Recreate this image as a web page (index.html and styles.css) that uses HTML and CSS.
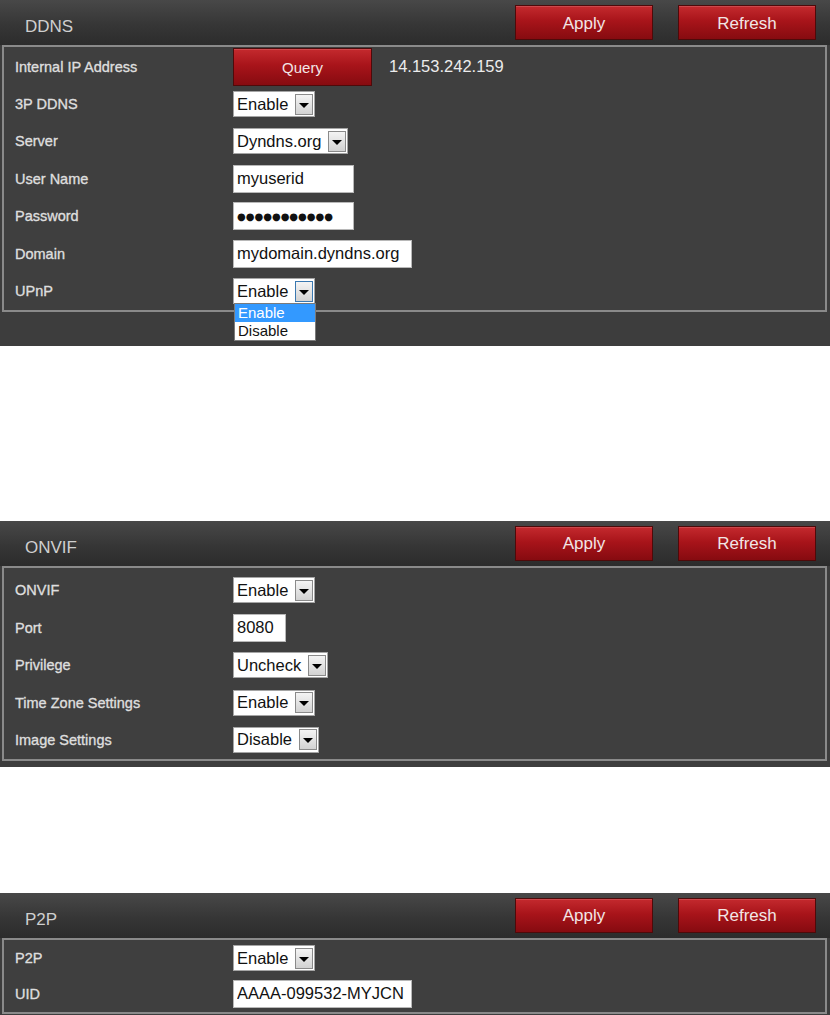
FILE: index.html
```html
<!DOCTYPE html>
<html lang="en">
<head>
    <meta charset="UTF-8">
    <meta name="viewport" content="width=device-width, initial-scale=1.0">
    <title>Network Settings</title>
    <link rel="stylesheet" href="styles.css">
</head>
<body>
    <!-- DDNS settings -->
    <div class="panel panel-ddns">
        <div class="panel-head">
            <span class="panel-title">DDNS</span>
            <div class="head-buttons">
                <button class="btn">Apply</button>
                <button class="btn">Refresh</button>
            </div>
        </div>
        <div class="panel-body">
            <div class="row">
                <span class="label">Internal IP Address</span>
                <button class="btn btn-query">Query</button>
                <span class="ip">14.153.242.159</span>
            </div>
            <div class="row">
                <span class="label">3P DDNS</span>
                <div class="select"><span class="select-text">Enable</span><span class="select-arrow"></span></div>
            </div>
            <div class="row">
                <span class="label">Server</span>
                <div class="select"><span class="select-text">Dyndns.org</span><span class="select-arrow"></span></div>
            </div>
            <div class="row">
                <span class="label">User Name</span>
                <input type="text" class="field field-mid" value="myuserid">
            </div>
            <div class="row">
                <span class="label">Password</span>
                <div class="field field-mid field-pass">●●●●●●●●●●●</div>
            </div>
            <div class="row">
                <span class="label">Domain</span>
                <input type="text" class="field field-long" value="mydomain.dyndns.org">
            </div>
            <div class="row">
                <span class="label">UPnP</span>
                <div class="select select-open">
                    <span class="select-text">Enable</span><span class="select-arrow"></span>
                    <ul class="options">
                        <li class="selected">Enable</li>
                        <li>Disable</li>
                    </ul>
                </div>
            </div>
        </div>
    </div>

    <!-- ONVIF settings -->
    <div class="panel panel-onvif">
        <div class="panel-head">
            <span class="panel-title">ONVIF</span>
            <div class="head-buttons">
                <button class="btn">Apply</button>
                <button class="btn">Refresh</button>
            </div>
        </div>
        <div class="panel-body body-pad">
            <div class="row">
                <span class="label">ONVIF</span>
                <div class="select"><span class="select-text">Enable</span><span class="select-arrow"></span></div>
            </div>
            <div class="row">
                <span class="label">Port</span>
                <input type="text" class="field field-short" value="8080">
            </div>
            <div class="row">
                <span class="label">Privilege</span>
                <div class="select"><span class="select-text">Uncheck</span><span class="select-arrow"></span></div>
            </div>
            <div class="row">
                <span class="label">Time Zone Settings</span>
                <div class="select"><span class="select-text">Enable</span><span class="select-arrow"></span></div>
            </div>
            <div class="row">
                <span class="label">Image Settings</span>
                <div class="select"><span class="select-text">Disable</span><span class="select-arrow"></span></div>
            </div>
        </div>
    </div>

    <!-- P2P settings -->
    <div class="panel panel-p2p">
        <div class="panel-head">
            <span class="panel-title">P2P</span>
            <div class="head-buttons">
                <button class="btn">Apply</button>
                <button class="btn">Refresh</button>
            </div>
        </div>
        <div class="panel-body">
            <div class="row">
                <span class="label">P2P</span>
                <div class="select"><span class="select-text">Enable</span><span class="select-arrow"></span></div>
            </div>
            <div class="row">
                <span class="label">UID</span>
                <input type="text" class="field field-long" value="AAAA-099532-MYJCN">
            </div>
        </div>
    </div>
</body>
</html>
```

FILE: styles.css
```css
/* page */
body {
    margin: 0;
    background: #fff;
    font-family: 'Liberation Sans', Arial, sans-serif;
}

/* panel frame */
.panel {
    background: #3d3d3d;
    padding: 0 3px 6px 2px;
}

.panel-ddns {
    padding-bottom: 34px;
    margin-bottom: 175px;
}

.panel-onvif {
    margin-bottom: 126px;
}

.panel-head {
    height: 45px;
    margin: 0 -3px 0 -2px;
    padding: 0 14px 0 25px;
    display: flex;
    align-items: center;
    justify-content: space-between;
    background: linear-gradient(to bottom, #484848 0%, #363636 55%, #2c2c2c 100%);
}

.panel-title {
    color: #cfcfcf;
    font-size: 17px;
    padding-top: 9px;
}

.head-buttons {
    display: flex;
    gap: 25px;
}

/* red buttons */
.btn {
    width: 138px;
    height: 35px;
    border: 1px solid #4e0a0a;
    background: linear-gradient(to bottom, #c42a2e 0%, #a8141a 45%, #860b10 100%);
    color: #f2e6e6;
    font-family: 'Liberation Sans', Arial, sans-serif;
    font-size: 17px;
    padding: 2px 0 0;
    box-shadow: inset 0 1px 0 rgba(255, 255, 255, 0.15);
    cursor: pointer;
}

.btn-query {
    width: 139px;
    height: 38px;
    font-size: 15px;
}

/* body box */
.panel-body {
    border: 2px solid #8a8a8a;
    background: #3f3f3f;
    padding-top: 1px;
}

.body-pad {
    padding-top: 4px;
}

.row {
    height: 37.4px;
    display: flex;
    align-items: center;
    padding-left: 11px;
}

.panel-p2p .row {
    height: 35.5px;
}

.label {
    width: 218px;
    flex-shrink: 0;
    color: #dedede;
    font-size: 14.5px;
    -webkit-text-stroke: 0.35px #dedede;
}

.ip {
    margin-left: 17px;
    color: #ececec;
    font-size: 16.5px;
}

/* text fields */
.field {
    box-sizing: border-box;
    height: 28px;
    border: 1px solid #b8b8b8;
    background: #fff;
    color: #111;
    font-family: 'Liberation Sans', Arial, sans-serif;
    font-size: 16.5px;
    padding: 0 3px;
    margin: 0;
    outline: none;
}

.field-short { width: 53px; }
.field-mid { width: 121px; }
.field-long { width: 179px; }

.field-pass {
    display: flex;
    align-items: center;
    font-family: 'DejaVu Sans', sans-serif;
    font-size: 10px;
}

/* select boxes */
.select {
    position: relative;
    height: 26px;
    box-sizing: border-box;
    display: inline-flex;
    align-items: center;
    background: #fff;
    border: 1px solid #a5a5a5;
}

.select-text {
    padding: 0 7px 0 3px;
    font-size: 16.5px;
    color: #111;
}

.select-arrow {
    width: 18px;
    height: 21px;
    margin-right: 1px;
    box-sizing: border-box;
    border: 1px solid #8a8a8a;
    background: linear-gradient(to bottom, #f4f4f4, #d2d2d2);
    display: flex;
    align-items: center;
    justify-content: center;
}

.select-arrow::after {
    content: "";
    border-left: 5px solid transparent;
    border-right: 5px solid transparent;
    border-top: 5px solid #000;
    margin-top: 2px;
}

.select-open .select-arrow {
    border-color: #3a78b0;
}

/* open dropdown list */
.options {
    position: absolute;
    top: 24px;
    left: 0;
    width: 82px;
    box-sizing: border-box;
    margin: 0;
    padding: 0;
    list-style: none;
    background: #fff;
    border: 1px solid #7a7a7a;
    font-size: 15px;
    z-index: 2;
}

.options li {
    height: 18px;
    line-height: 18px;
    padding-left: 3px;
    color: #111;
}

.options .selected {
    background: #3399ff;
    color: #fff;
}
```
